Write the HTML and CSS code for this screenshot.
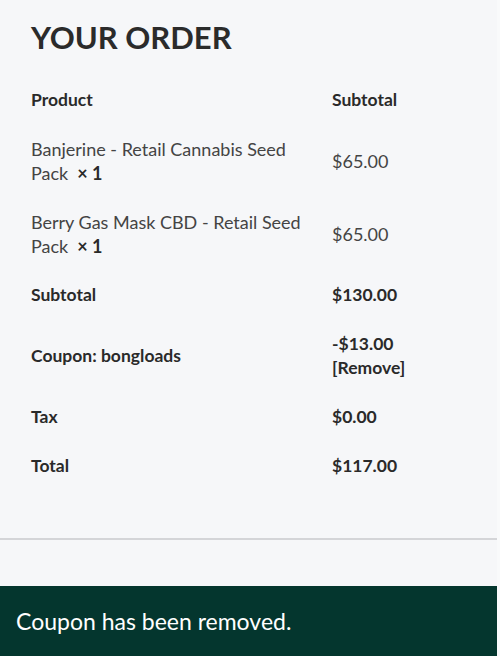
FILE: index.html
```html
<!DOCTYPE html>
<html lang="en">
<head>
    <meta charset="UTF-8">
    <meta name="viewport" content="width=device-width, initial-scale=1.0">
    <title>Your Order</title>
    <link rel="stylesheet" href="styles.css">
</head>
<body>
    <div class="page">
        <div class="order">
            <h2>YOUR ORDER</h2>
            <table class="order-table">
                <thead>
                    <tr>
                        <th>Product</th>
                        <th>Subtotal</th>
                    </tr>
                </thead>
                <tbody>
                    <tr class="item">
                        <td>Banjerine - Retail Cannabis Seed <span class="tail">Pack<strong class="qty">× 1</strong></span></td>
                        <td>$65.00</td>
                    </tr>
                    <tr class="item">
                        <td>Berry Gas Mask CBD - Retail Seed <span class="tail">Pack<strong class="qty">× 1</strong></span></td>
                        <td>$65.00</td>
                    </tr>
                </tbody>
                <tfoot>
                    <tr>
                        <th>Subtotal</th>
                        <td>$130.00</td>
                    </tr>
                    <tr>
                        <th>Coupon: bongloads</th>
                        <td>-$13.00 <a href="#">[Remove]</a></td>
                    </tr>
                    <tr>
                        <th>Tax</th>
                        <td>$0.00</td>
                    </tr>
                    <tr>
                        <th>Total</th>
                        <td>$117.00</td>
                    </tr>
                </tfoot>
            </table>
        </div>
        <hr class="divider">
        <div class="notice">Coupon has been removed.</div>
    </div>
</body>
</html>
```

FILE: styles.css
```css
body {
    margin: 0;
    background: #f9fafb;
    color: #2a2a2a;
    font-family: Lato, "Noto Sans", sans-serif;
}

.page {
    width: 497px;
    background: #f6f7f9;
    min-height: 656px;
}

.order {
    padding: 19px 0 0 31px;
}

h2 {
    margin: 0;
    font-size: 31px;
    font-weight: 700;
    line-height: 36px;
    color: #2b2b2b;
}

.order-table {
    margin-top: 21px;
    border-collapse: collapse;
    font-size: 17.5px;
    line-height: 24px;
}

.order-table th,
.order-table td {
    padding: 12px 0 13px;
    text-align: left;
    vertical-align: middle;
}

.order-table th {
    font-weight: 700;
}

.order-table tr > :first-child {
    width: 301px;
    padding-right: 28px;
    box-sizing: border-box;
}

.order-table tr > :last-child {
    width: 120px;
}

.item td {
    color: #444;
    font-size: 18px;
}

.item .tail {
    display: inline-block;
    white-space: nowrap;
}

.item .qty {
    margin-left: 9px;
    color: #2a2a2a;
}

tfoot td {
    font-weight: 700;
}

tfoot a {
    color: #2a2a2a;
    text-decoration: none;
}

.divider {
    margin: 47px 0 0;
    border: none;
    border-top: 2px solid #d4d5d8;
}

.notice {
    margin-top: 46px;
    background: #04362e;
    color: #fff;
    font-size: 23px;
    padding: 22px 16px 24px;
    line-height: 26px;
}
```
